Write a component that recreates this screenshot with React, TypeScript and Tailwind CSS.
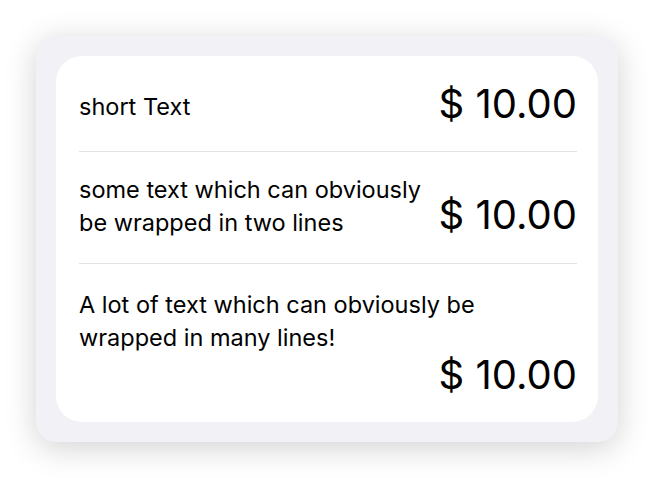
const rows = [
  { lines: ['short Text'], price: '$ 10.00', layout: 'center' },
  { lines: ['some text which can obviously', 'be wrapped in two lines'], price: '$ 10.00', layout: 'end' },
  { lines: ['A lot of text which can obviously be', 'wrapped in many lines!'], price: '$ 10.00', layout: 'stack' },
]

const Label = ({ lines, className = '' }: { lines: string[]; className?: string }) => (
  <p className={`text-[23.5px] leading-[33px] text-black ${className}`}>
    {lines.map((line, i) => (
      <span key={i} className="block whitespace-nowrap">
        {line}
      </span>
    ))}
  </p>
)

const Price = ({ value }: { value: string }) => (
  <span className="whitespace-nowrap text-[40px] leading-[48px] text-black">{value}</span>
)

export default function App() {
  return (
    <div className="h-screen w-full bg-white p-9" style={{ fontFamily: 'Inter, "Noto Sans", sans-serif' }}>
      <div className="h-full rounded-[20px] bg-[#f1f1f6] p-5 shadow-[0_6px_32px_rgba(0,0,0,0.18)]">
        <div className="h-full rounded-[26px] bg-white pl-[23px] pr-[21px]">
          {rows.map((row, i) => (
            <div key={i} className={i < rows.length - 1 ? 'border-b border-[#e2e2e6]' : ''}>
              {row.layout === 'center' && (
                <div className="flex items-center justify-between gap-4 pt-[24px] pb-[23px]">
                  <Label lines={row.lines} className="mt-1" />
                  <Price value={row.price} />
                </div>
              )}
              {row.layout === 'end' && (
                <div className="flex items-end justify-between gap-4 pt-[21px] pb-[24px]">
                  <Label lines={row.lines} />
                  <Price value={row.price} />
                </div>
              )}
              {row.layout === 'stack' && (
                <div className="flex flex-col pt-[24px]">
                  <Label lines={row.lines} />
                  <div className="-mt-[3px] flex justify-end">
                    <Price value={row.price} />
                  </div>
                </div>
              )}
            </div>
          ))}
        </div>
      </div>
    </div>
  )
}
